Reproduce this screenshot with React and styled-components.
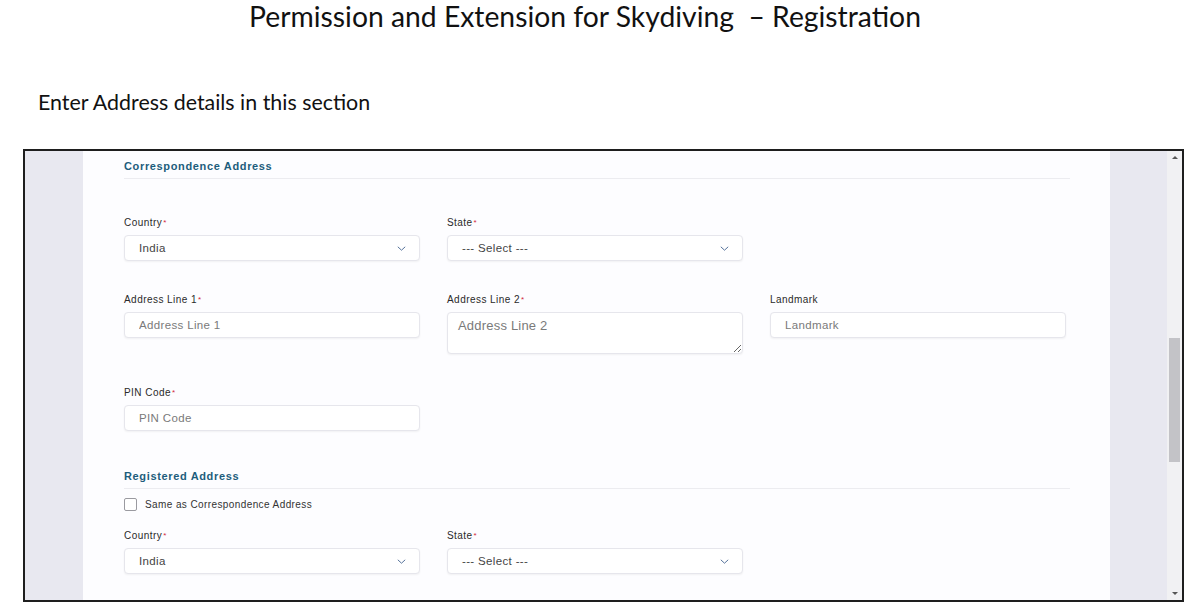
import React from "react";
import styled, { createGlobalStyle } from "styled-components";

const GlobalStyle = createGlobalStyle`
  body {
    margin: 0;
    background: #ffffff;
    font-family: "Liberation Sans", Arial, sans-serif;
  }
`;

const Page = styled.div`
  width: 1200px;
  height: 612px;
  overflow: hidden;
  background: #ffffff;
`;

const Title = styled.h1`
  margin: 0;
  font-family: Lato, "Open Sans", sans-serif;
  font-weight: 400;
  font-size: 28.3px;
  line-height: 32px;
  color: #111;
  text-align: center;
  padding-right: 30px;
  white-space: pre;
`;

const Intro = styled.p`
  margin: 57px 0 0 38px;
  font-family: Lato, "Open Sans", sans-serif;
  font-size: 21.4px;
  line-height: 26px;
  color: #111;
`;

const Frame = styled.div`
  margin: 34px 0 0 23px;
  width: 1161px;
  height: 453px;
  box-sizing: border-box;
  border: 2px solid #1e1e1e;
  display: grid;
  grid-template-columns: 58px 1027px 57px 15px;
  overflow: hidden;
`;

const SideStrip = styled.div`
  background: #e8e8f0;
`;

const Content = styled.div`
  background: #fdfdff;
  padding: 8px 40px 0 41px;
  overflow: hidden;
`;

const SectionTitle = styled.div`
  font-size: 11px;
  line-height: 14px;
  font-weight: 700;
  letter-spacing: 0.65px;
  color: #1d5d7c;
  padding-bottom: 5px;
  border-bottom: 1px solid #ececf0;
  margin-top: ${(p) => p.$top || 0}px;
`;

const Row = styled.div`
  display: grid;
  grid-template-columns: 296px 296px 296px;
  column-gap: 27px;
  margin-top: ${(p) => p.$top}px;
`;

const Field = styled.div`
  display: flex;
  flex-direction: column;
`;

const Label = styled.label`
  font-size: 10px;
  line-height: 12px;
  letter-spacing: 0.45px;
  color: #2a2a2a;
  margin-bottom: 6px;
`;

const Star = styled.span`
  color: #d2283c;
  font-size: 8px;
  vertical-align: top;
  margin-left: 1px;
`;

const boxStyles = `
  box-sizing: border-box;
  width: 296px;
  border: 1px solid #e6e6ec;
  border-radius: 4px;
  background: #ffffff;
  box-shadow: 0 1px 2px rgba(0, 0, 0, 0.05);
  font-family: "Liberation Sans", Arial, sans-serif;
  font-size: 11.5px;
  letter-spacing: 0.35px;
  color: #444;
`;

const SelectBox = styled.div`
  ${boxStyles}
  height: 26px;
  display: flex;
  align-items: center;
  justify-content: space-between;
  padding: 0 13px 0 14px;
`;

const Input = styled.input`
  ${boxStyles}
  height: 26px;
  padding: 0 14px;
  outline: none;
  &::placeholder {
    color: #7a7a7a;
  }
`;

const TextArea = styled.textarea`
  ${boxStyles}
  height: 42px;
  padding: 5px 10px;
  font-size: 13px;
  letter-spacing: 0.2px;
  outline: none;
  resize: vertical;
  &::placeholder {
    color: #7a7a7a;
  }
`;

const CheckRow = styled.div`
  display: flex;
  align-items: center;
  gap: 8px;
  margin-top: 9px;
  font-size: 10px;
  letter-spacing: 0.4px;
  color: #333;
`;

const CheckBox = styled.span`
  width: 11px;
  height: 11px;
  border: 1px solid #9a9aa0;
  border-radius: 2px;
  background: #fff;
`;

const ScrollBar = styled.div`
  background: #f1f1f3;
  display: flex;
  flex-direction: column;
  align-items: center;
`;

const Arrow = styled.div`
  width: 0;
  height: 0;
  border-left: 3px solid transparent;
  border-right: 3px solid transparent;
  ${(p) =>
    p.$down
      ? "border-top: 3px solid #555; margin-top: auto; margin-bottom: 5px;"
      : "border-bottom: 3px solid #555; margin-top: 5px;"}
`;

const Thumb = styled.div`
  width: 11px;
  height: 124px;
  margin-top: 179px;
  background: #c3c3c7;
`;

const Chevron = () => (
  <svg width="9" height="5" viewBox="0 0 9 5">
    <path d="M0.8 0.8l3.7 3.4 3.7-3.4" fill="none" stroke="#56739a" strokeWidth="1" />
  </svg>
);

const Select = ({ value }) => (
  <SelectBox>
    <span>{value}</span>
    <Chevron />
  </SelectBox>
);

const FieldLabel = ({ text, required }) => (
  <Label>
    {text}
    {required && <Star>*</Star>}
  </Label>
);

export default function App() {
  return (
    <Page>
      <GlobalStyle />
      <Title>{"Permission and Extension for Skydiving  \u2013 Registration"}</Title>
      <Intro>Enter Address details in this section</Intro>
      <Frame>
        <SideStrip />
        <Content>
          <SectionTitle>Correspondence Address</SectionTitle>
          <Row $top={38}>
            <Field>
              <FieldLabel text="Country" required />
              <Select value="India" />
            </Field>
            <Field>
              <FieldLabel text="State" required />
              <Select value="--- Select ---" />
            </Field>
          </Row>
          <Row $top={33}>
            <Field>
              <FieldLabel text="Address Line 1" required />
              <Input placeholder="Address Line 1" />
            </Field>
            <Field>
              <FieldLabel text="Address Line 2" required />
              <TextArea placeholder="Address Line 2" />
            </Field>
            <Field>
              <FieldLabel text="Landmark" />
              <Input placeholder="Landmark" />
            </Field>
          </Row>
          <Row $top={33}>
            <Field>
              <FieldLabel text="PIN Code" required />
              <Input placeholder="PIN Code" />
            </Field>
          </Row>
          <SectionTitle $top={38}>Registered Address</SectionTitle>
          <CheckRow>
            <CheckBox />
            <span>Same as Correspondence Address</span>
          </CheckRow>
          <Row $top={19}>
            <Field>
              <FieldLabel text="Country" required />
              <Select value="India" />
            </Field>
            <Field>
              <FieldLabel text="State" required />
              <Select value="--- Select ---" />
            </Field>
          </Row>
        </Content>
        <SideStrip />
        <ScrollBar>
          <Arrow />
          <Thumb />
          <Arrow $down />
        </ScrollBar>
      </Frame>
    </Page>
  );
}
